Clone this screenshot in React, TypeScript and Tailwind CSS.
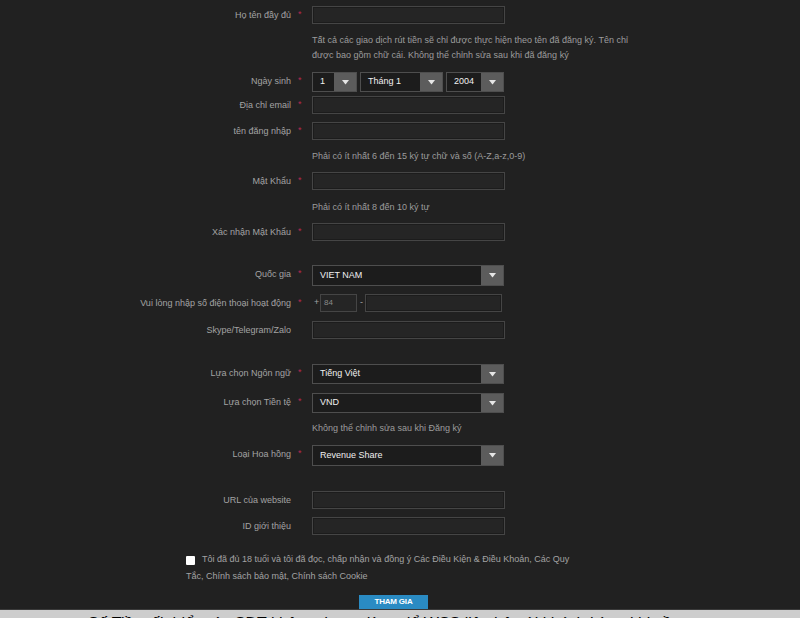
import React, { ReactNode } from "react";

const font = { fontFamily: '"Liberation Sans", Arial, sans-serif' };

interface RowProps {
  label?: string;
  required?: boolean;
  className?: string;
  children: ReactNode;
}

const Row = ({ label, required, className, children }: RowProps) => {
  return (
    <div className={"flex items-start " + (className || "")}>
      <div className="w-[291px] shrink-0 pt-[3px] text-right text-[9px] leading-[12px] text-[#a3a3a3]">
        {label}
      </div>
      <div className="w-[21px] shrink-0 pl-[7px] pt-[2px] text-[9px] leading-[12px] text-[#b4284f]">
        {required ? "*" : ""}
      </div>
      <div className="flex items-center">{children}</div>
    </div>
  );
};

const TextInput = ({ className }: { className?: string }) => (
  <div
    className={
      "h-[18px] border border-[#454545] bg-[#252525] shadow-[inset_0_0_0_1px_#1c1c1c] " +
      (className || "w-[193px]")
    }
  ></div>
);

const Arrow = () => (
  <svg width="7" height="5" viewBox="0 0 7 5">
    <path d="M0 0 L7 0 L3.5 4.5 Z" fill="#e6e6e6" />
  </svg>
);

interface SelectProps {
  value: string;
  className: string;
}
const Select = ({ value, className }: SelectProps) => (
  <div
    className={
      "flex items-stretch border border-[#4e4e4e] bg-[#1c1c1c] " + className
    }
  >
    <div className="flex flex-1 items-center pl-[7px] text-[9px] text-[#f0f0f0]">
      {value}
    </div>
    <div className="flex w-[22px] items-center justify-center bg-[#5c5c5c]">
      <Arrow />
    </div>
  </div>
);

const Hint = ({ className, children }: { className?: string; children: ReactNode }) => (
  <div className={"pl-[312px] text-[9px] leading-[15px] text-[#9c9c9c] " + (className || "")}>
    {children}
  </div>
);

const App = () => {
  return (
    <div className="h-[618px] w-full overflow-hidden bg-[#212121]" style={font}>
      <div className="flex flex-col">
        <Row label="Họ tên đầy đủ" required className="mt-[6px]">
          <TextInput />
        </Row>
        <Hint className="mt-[9px]">
          Tất cả các giao dịch rút tiền sẽ chỉ được thực hiện theo tên đã đăng ký. Tên chỉ
          <br />
          được bao gồm chữ cái. Không thể chỉnh sửa sau khi đã đăng ký
        </Hint>
        <Row label="Ngày sinh" required className="mt-[9px]">
          <div className="flex gap-[3px]">
            <Select value="1" className="h-[20px] w-[45px]" />
            <Select value="Tháng 1" className="h-[20px] w-[83px]" />
            <Select value="2004" className="h-[20px] w-[58px]" />
          </div>
        </Row>
        <Row label="Địa chỉ email" required className="mt-[4px]">
          <TextInput />
        </Row>
        <Row label="tên đăng nhập" required className="mt-[8px]">
          <TextInput />
        </Row>
        <Hint className="mt-[9px]">Phải có ít nhất 6 đến 15 ký tự chữ và số (A-Z,a-z,0-9)</Hint>
        <Row label="Mật Khẩu" required className="mt-[8px]">
          <TextInput />
        </Row>
        <Hint className="mt-[10px]">Phải có ít nhất 8 đến 10 ký tự</Hint>
        <Row label="Xác nhận Mật Khẩu" required className="mt-[8px]">
          <TextInput />
        </Row>

        <Row label="Quốc gia" required className="mt-[24px]">
          <Select value="VIET NAM" className="h-[21px] w-[192px]" />
        </Row>
        <Row label="Vui lòng nhập số điện thoại hoạt động" required className="mt-[8px]">
          <span className="w-[8px] pl-[2px] text-[9px] text-[#a3a3a3]">+</span>
          <div className="flex h-[18px] w-[37px] items-center border border-[#454545] bg-[#252525] pl-[3px] text-[8px] text-[#8a8a8a]">
            84
          </div>
          <span className="w-[8px] pl-[3px] text-[9px] text-[#a3a3a3]">-</span>
          <TextInput className="w-[137px]" />
        </Row>
        <Row label="Skype/Telegram/Zalo" className="mt-[9px]">
          <TextInput />
        </Row>

        <Row label="Lựa chọn Ngôn ngữ" required className="mt-[25px]">
          <Select value="Tiếng Việt" className="h-[20px] w-[192px]" />
        </Row>
        <Row label="Lựa chọn Tiền tệ" required className="mt-[9px]">
          <Select value="VND" className="h-[20px] w-[192px]" />
        </Row>
        <Hint className="mt-[8px]">Không thể chỉnh sửa sau khi Đăng ký</Hint>
        <Row label="Loại Hoa hồng" required className="mt-[9px]">
          <Select value="Revenue Share" className="h-[21px] w-[192px]" />
        </Row>

        <Row label="URL của website" className="mt-[25px]">
          <TextInput />
        </Row>
        <Row label="ID giới thiệu" className="mt-[8px]">
          <TextInput />
        </Row>

        <div className="mt-[16px] pl-[186px] text-[9px] leading-[17px] text-[#a3a3a3]">
          <span className="mr-[7px] inline-block h-[9px] w-[9px] translate-y-[1px] rounded-[1px] bg-white align-middle"></span>
          Tôi đã đủ 18 tuổi và tôi đã đọc, chấp nhận và đồng ý Các Điều Kiện &amp; Điều Khoản, Các Quy
          <br />
          Tắc, Chính sách bảo mật, Chính sách Cookie
        </div>

        <div className="mt-[10px] flex pl-[359px]">
          <button className="h-[14px] w-[69px] bg-[#2a8bc3] text-[8px] font-bold leading-[14px] tracking-[-0.2px] text-white">
            THAM GIA
          </button>
        </div>

        <div className="h-[9px] overflow-hidden border-t border-[#3a3a3a] bg-[#cdcdcd]">
          <div className="pl-[88px] pt-[4px] text-[16px] leading-[20px] text-black">
            Số Tiền tối thiểu rút: SĐT không được dùng để WSS liên hệ với khách hàng khi cần
          </div>
        </div>
      </div>
    </div>
  );
};

export default App;
